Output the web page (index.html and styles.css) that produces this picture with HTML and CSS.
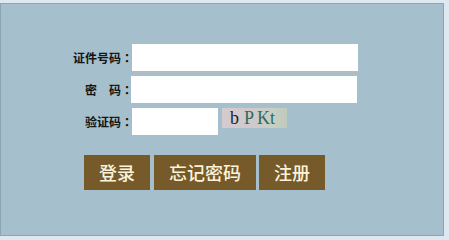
FILE: index.html
```html
<!DOCTYPE html>
<html lang="zh">
<head>
<meta charset="utf-8">
<title>登录</title>
<link rel="stylesheet" href="styles.css">
</head>
<body>
<div class="panel">
  <div class="row">
    <label class="lbl">证件号码<span class="colon">：</span></label>
    <input class="field field-first" type="text">
  </div>
  <div class="row">
    <label class="lbl">密&emsp;码<span class="colon">：</span></label>
    <input class="field field-second" type="password">
  </div>
  <div class="row row-top">
    <label class="lbl">验证码<span class="colon">：</span></label>
    <input class="field field-short" type="text">
    <div class="captcha"><span class="c1">b</span><span class="c2">P</span><span class="c3">Kt</span></div>
  </div>
  <div class="actions">
    <button class="btn btn-login">登录</button>
    <button class="btn btn-forgot">忘记密码</button>
    <button class="btn btn-reg">注册</button>
  </div>
</div>
</body>
</html>
```
FILE: styles.css
```css
html, body {
  margin: 0;
  padding: 0;
  background: #dde9ee;
  width: 449px;
  height: 236px;
  overflow: hidden;
}
.panel {
  box-sizing: border-box;
  margin-top: 3px;
  width: 444px;
  height: 233px;
  background: #a6bfcc;
  border: 1px solid #8aa5b4;
  padding-top: 40px;
  font-family: "Noto Sans CJK SC", "Noto Sans", sans-serif;
}
.row {
  display: flex;
  align-items: center;
  height: 27px;
  margin-bottom: 5px;
  padding-left: 59px;
}
.row-top {
  align-items: flex-start;
}
.lbl {
  width: 71px;
  text-align: right;
  font-size: 12px;
  font-weight: 700;
  color: #141414;
  line-height: 27px;
  margin-right: 1px;
  white-space: nowrap;
}
.colon {
  font-family: "Noto Sans CJK TC", "Noto Sans CJK SC", sans-serif;
  display: inline-block;
  width: 10px;
  text-align: center;
}
.field {
  box-sizing: border-box;
  height: 27px;
  border: none;
  background: #ffffff;
  outline: none;
  padding: 0 4px;
  margin: 0;
}
.field-first {
  width: 226px;
  box-shadow: 0 2px 0 #b4bbc1;
}
.field-second {
  width: 226px;
  margin-left: -1px;
}
.field-short {
  width: 86px;
}
.captcha {
  margin-left: 4px;
  width: 65px;
  height: 20px;
  box-sizing: border-box;
  background: linear-gradient(90deg, #d6cbcf 0%, #cfc9cc 45%, #c6d0c4 75%, #bfcbbd 100%);
  font-family: "Liberation Serif", serif;
  font-size: 18px;
  line-height: 20px;
  padding-left: 8px;
  white-space: nowrap;
}
.c1 { color: #1e1d2c; margin-right: 5px; }
.c2 { color: #2e6a5e; margin-right: 3px; }
.c3 { color: #2f6b60; }
.actions {
  display: flex;
  margin-top: 20px;
  padding-left: 83px;
}
.btn {
  height: 35px;
  border: none;
  margin: 0;
  padding: 0;
  background: #765a2a;
  color: #fbf4dc;
  font-family: "Noto Sans CJK SC", "Noto Sans", sans-serif;
  font-size: 18px;
  font-weight: 500;
  line-height: 35px;
}
.btn-login { width: 66px; margin-right: 4px; }
.btn-forgot { width: 102px; margin-right: 3px; }
.btn-reg { width: 66px; }
```
